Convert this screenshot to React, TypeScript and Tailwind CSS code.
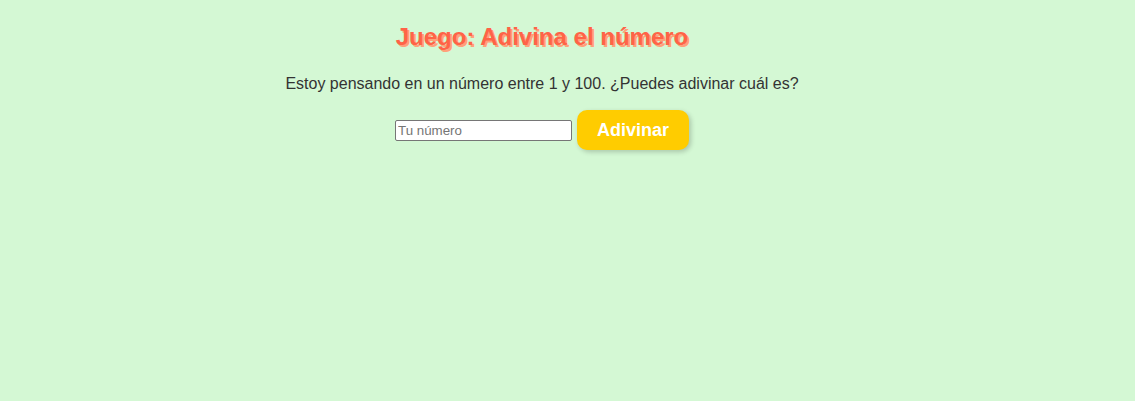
export default function App() {
  return (
    <div className="min-h-[401px] w-full bg-[#d4f8d4] pr-[51px] font-['Comic_Sans_MS','Liberation_Sans',sans-serif] text-[#333]">
      <div className="flex flex-col items-center pt-[21px]">
        <h1 className="text-[24px] font-bold leading-[32px] text-[#ff6347] [text-shadow:2px_2px_#ffa07a]">
          Juego: Adivina el número
        </h1>
        <p className="mt-[21px] text-[16px] leading-[20px]">
          Estoy pensando en un número entre 1 y 100. ¿Puedes adivinar cuál es?
        </p>
        <div className="mt-[16px] flex items-center gap-[5px]">
          <input
            type="number"
            placeholder="Tu número"
            className="h-[21px] w-[177px] rounded-[2px] border border-[#767676] bg-white px-[2px] font-['Liberation_Sans',Arial,sans-serif] text-[13.33px] text-black placeholder:text-[#757575] [appearance:textfield]"
          />
          <button className="h-[40px] w-[112px] rounded-[10px] bg-[#ffcc00] font-['Liberation_Sans',Arial,sans-serif] text-[18px] font-bold text-white shadow-[2px_2px_5px_rgba(0,0,0,0.2)]">
            Adivinar
          </button>
        </div>
      </div>
    </div>
  );
}
